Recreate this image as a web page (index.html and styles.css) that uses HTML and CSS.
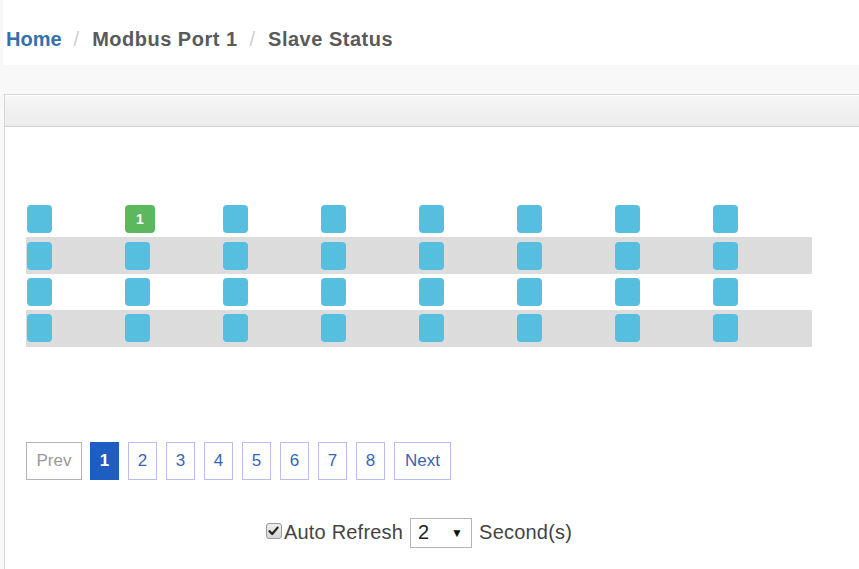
FILE: index.html
```html
<!DOCTYPE html>
<html lang="en">
<head>
<meta charset="utf-8">
<title>Slave Status</title>
<link rel="stylesheet" href="styles.css">
</head>
<body>
<div class="breadcrumb">
  <a class="crumb-link" href="#">Home</a><span class="sep">/</span><span class="crumb">Modbus Port 1</span><span class="sep">/</span><span class="crumb">Slave Status</span>
</div>
<div class="panel">
  <div class="panel-heading"></div>
  <div class="panel-body">
    <div class="content">
      <div class="grid">
        <div class="row">
          <div class="cell"><span class="slave"></span></div>
          <div class="cell"><span class="slave ok">1</span></div>
          <div class="cell"><span class="slave"></span></div>
          <div class="cell"><span class="slave"></span></div>
          <div class="cell"><span class="slave"></span></div>
          <div class="cell"><span class="slave"></span></div>
          <div class="cell"><span class="slave"></span></div>
          <div class="cell"><span class="slave"></span></div>
        </div>
        <div class="row">
          <div class="cell"><span class="slave"></span></div>
          <div class="cell"><span class="slave"></span></div>
          <div class="cell"><span class="slave"></span></div>
          <div class="cell"><span class="slave"></span></div>
          <div class="cell"><span class="slave"></span></div>
          <div class="cell"><span class="slave"></span></div>
          <div class="cell"><span class="slave"></span></div>
          <div class="cell"><span class="slave"></span></div>
        </div>
        <div class="row">
          <div class="cell"><span class="slave"></span></div>
          <div class="cell"><span class="slave"></span></div>
          <div class="cell"><span class="slave"></span></div>
          <div class="cell"><span class="slave"></span></div>
          <div class="cell"><span class="slave"></span></div>
          <div class="cell"><span class="slave"></span></div>
          <div class="cell"><span class="slave"></span></div>
          <div class="cell"><span class="slave"></span></div>
        </div>
        <div class="row">
          <div class="cell"><span class="slave"></span></div>
          <div class="cell"><span class="slave"></span></div>
          <div class="cell"><span class="slave"></span></div>
          <div class="cell"><span class="slave"></span></div>
          <div class="cell"><span class="slave"></span></div>
          <div class="cell"><span class="slave"></span></div>
          <div class="cell"><span class="slave"></span></div>
          <div class="cell"><span class="slave"></span></div>
        </div>
      </div>

      <div class="pagination">
        <span class="page prev">Prev</span>
        <span class="page num active">1</span>
        <span class="page num">2</span>
        <span class="page num">3</span>
        <span class="page num">4</span>
        <span class="page num">5</span>
        <span class="page num">6</span>
        <span class="page num">7</span>
        <span class="page num">8</span>
        <span class="page next">Next</span>
      </div>

      <div class="refresh">
        <span class="checkbox"><svg width="11" height="10" viewBox="0 0 11 10"><path d="M1.5 5.2 L4.2 8 L9.6 1.6" fill="none" stroke="#222" stroke-width="2.2" stroke-linecap="round" stroke-linejoin="round"/></svg></span><span class="label">Auto Refresh</span>
        <span class="select"><span class="select-value">2</span><span class="arrow">&#9660;</span></span>
        <span class="label">Second(s)</span>
      </div>
    </div>
  </div>
</div>
</body>
</html>
```

FILE: styles.css
```css
html, body {
  margin: 0;
  padding: 0;
}

body {
  background: #f8f8f8;
  font-family: "Liberation Sans", Arial, sans-serif;
  height: 569px;
  overflow: hidden;
  display: flex;
  flex-direction: column;
}

.breadcrumb {
  margin-left: 3px;
  height: 65px;
  flex: none;
  background: #ffffff;
  box-sizing: border-box;
  padding-top: 27px;
  padding-left: 3px;
  font-size: 20px;
  font-weight: bold;
  line-height: 24px;
  letter-spacing: 0.5px;
  white-space: nowrap;
}

.crumb-link {
  color: #3570ad;
  text-decoration: none;
  letter-spacing: 0;
}

.crumb {
  color: #5a5a5a;
}

.sep {
  color: #cfcfcf;
  font-weight: normal;
  letter-spacing: 0;
  padding: 0 13px 0 12px;
}

.panel {
  flex: 1;
  margin-top: 29px;
  margin-left: 4px;
  border: 1px solid #d6d6d6;
  border-right: none;
  border-bottom: none;
  background: #ffffff;
}

.panel-heading {
  height: 30px;
  border-top: 1px solid #ffffff;
  background: linear-gradient(to bottom, #f6f6f6, #ececec);
  border-bottom: 1px solid #d3d3d3;
}

.panel-body {
  padding: 74px 0 0 21px;
}

.content {
  width: 786px;
}

.grid {
  display: flex;
  flex-direction: column;
}

.row {
  display: flex;
  align-items: center;
  height: 36.4px;
}

.row:nth-child(even) {
  background: #dcdcdc;
}

.cell {
  width: 98px;
  box-sizing: border-box;
  padding-left: 1px;
  display: flex;
  align-items: center;
}

.slave {
  display: block;
  width: 25px;
  height: 28px;
  border-radius: 4px;
  background: #56bfe0;
}

.slave.ok {
  width: 30px;
  background: #5cb85c;
  color: #ffffff;
  font-weight: bold;
  font-size: 14px;
  line-height: 28px;
  text-align: center;
}

.pagination {
  margin-top: 95px;
  display: flex;
  align-items: center;
  height: 38px;
}

.page {
  box-sizing: border-box;
  height: 38px;
  line-height: 36px;
  font-size: 17px;
  text-align: center;
  border: 1px solid #bcbcef;
  color: #3a63b4;
  background: #ffffff;
}

.prev {
  width: 56px;
  border: 1px solid #b3b3b3;
  color: #9a9a9a;
  margin-right: 8px;
}

.num {
  width: 29px;
  margin-right: 9px;
}

.num.active {
  background: #1e5ec2;
  border-color: #1e5ec2;
  color: #ffffff;
  font-weight: bold;
}

.next {
  width: 57px;
}

.refresh {
  margin-top: 38px;
  display: flex;
  justify-content: center;
  align-items: center;
  height: 30px;
  font-size: 20px;
  letter-spacing: 0.2px;
  color: #444444;
}

.checkbox {
  width: 14px;
  height: 14px;
  border: 1px solid #9a9a9a;
  border-radius: 3px;
  background: linear-gradient(to bottom, #eeeeee, #d6d6d6);
  display: flex;
  align-items: center;
  justify-content: center;
  margin-right: 2px;
  margin-top: -3px;
}

.select {
  box-sizing: border-box;
  width: 62px;
  height: 30px;
  border: 1px solid #b5b5b5;
  margin: 0 7px 0 7px;
  display: flex;
  align-items: center;
  justify-content: space-between;
  padding: 0 8px 0 7px;
  color: #222222;
  background: #ffffff;
}

.arrow {
  font-size: 12px;
  color: #111111;
}
```
